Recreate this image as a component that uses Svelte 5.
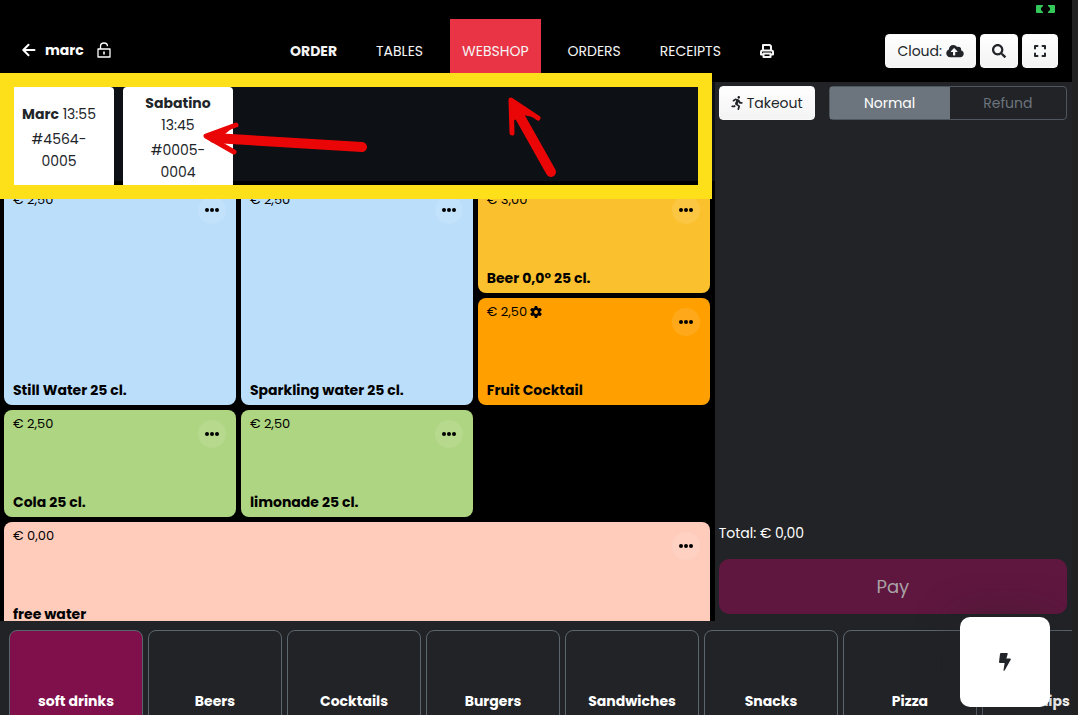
<script lang="ts">
	type Tile = { name: string; price: string; color: string; area: string; options?: boolean };

	const nav = ['ORDER', 'TABLES', 'WEBSHOP', 'ORDERS', 'RECEIPTS'];
	const tickets = [
		{ name: 'Marc', time: '13:55', ref: '#4564-0005' },
		{ name: 'Sabatino', time: '13:45', ref: '#0005-0004' }
	];
	const products: Tile[] = [
		{ name: 'Still Water 25 cl.', price: '€ 2,50', color: 'blue', area: 'tall' },
		{ name: 'Sparkling water 25 cl.', price: '€ 2,50', color: 'blue', area: 'tall' },
		{ name: 'Beer 0,0° 25 cl.', price: '€ 3,00', color: 'amber', area: '' },
		{ name: 'Fruit Cocktail', price: '€ 2,50', color: 'orange', area: '', options: true },
		{ name: 'Cola 25 cl.', price: '€ 2,50', color: 'green', area: 'first' },
		{ name: 'limonade 25 cl.', price: '€ 2,50', color: 'green', area: '' },
		{ name: 'free water', price: '€ 0,00', color: 'peach', area: 'wide' }
	];
	const categories = ['soft drinks', 'Beers', 'Cocktails', 'Burgers', 'Sandwiches', 'Snacks', 'Pizza', 'Chips'];

	let category = $state('soft drinks');
	let mode = $state('Normal');
</script>

<div class="pos">
	<header>
		<div class="brand">
			<button class="plain" aria-label="Back">
				<svg width="14" height="14" viewBox="0 0 14 14" fill="none" stroke="currentColor" stroke-width="2" stroke-linecap="round" stroke-linejoin="round">
					<path d="M12.5 7H1.5M6.5 1.8L1.3 7l5.2 5.2" />
				</svg>
			</button>
			<strong>marc</strong>
			<button class="plain" aria-label="Unlock">
				<svg width="14" height="16" viewBox="0 0 14 16" fill="none" stroke="currentColor" stroke-width="1.3" stroke-linejoin="round">
					<path d="M1 7h12v8H1zM3.5 7V4.2C3.5 2.3 5 1 7 1s3.5 1.3 3.5 3.2" />
					<path d="M7 9.5v3" stroke-width="1.6" />
				</svg>
			</button>
		</div>
		<nav>
			{#each nav as item}
				<a href="#{item.toLowerCase()}" class:current={item === 'ORDER'} class:alert={item === 'WEBSHOP'}>{item}</a>
			{/each}
			<a href="#print" aria-label="Print">
				<svg width="14" height="14" viewBox="0 0 14 14" fill="none" stroke="currentColor" stroke-width="2" stroke-linejoin="round">
					<path d="M3 6V1h6.8L11 2.200V6M3 10.500H1V8q0-1.500 1.500-1.500h9Q13 6.500 13 8v2.500h-2M3.500 9.500h7V13h-7z" />
				</svg>
			</a>
		</nav>
		<div class="actions">
			<button class="btn">
				Cloud:
				<svg width="18" height="14" viewBox="0 0 640 512" fill="currentColor">
					<path d="M537.6 226.6c4.1-10.7 6.4-22.4 6.4-34.6 0-53-43-96-96-96-19.7 0-38.1 6-53.3 16.2C367 64.2 315.3 32 256 32c-88.4 0-160 71.6-160 160 0 2.7.1 5.4.2 8.1C40.2 219.8 0 273.2 0 336c0 79.5 64.5 144 144 144h368c70.7 0 128-57.3 128-128 0-61.9-44-113.6-102.4-125.4zM393.4 288H328v112c0 8.8-7.2 16-16 16h-48c-8.8 0-16-7.2-16-16V288h-65.4c-14.3 0-21.4-17.2-11.3-27.3l105.4-105.4c6.2-6.2 16.4-6.2 22.6 0l105.4 105.4c10.1 10.1 2.9 27.3-11.3 27.3z" />
				</svg>
			</button>
			<button class="btn" aria-label="Search">
				<svg width="14" height="14" viewBox="0 0 512 512" fill="currentColor">
					<path d="M505 442.7L405.3 343c-4.5-4.5-10.6-7-17-7H372c27.6-35.3 44-79.7 44-128C416 93.1 322.9 0 208 0S0 93.1 0 208s93.1 208 208 208c48.3 0 92.7-16.4 128-44v16.3c0 6.4 2.5 12.5 7 17l99.7 99.7c9.4 9.4 24.6 9.4 33.9 0l28.3-28.3c9.4-9.4 9.4-24.6.1-34zM208 336c-70.7 0-128-57.2-128-128 0-70.7 57.2-128 128-128 70.7 0 128 57.2 128 128 0 70.7-57.2 128-128 128z" />
				</svg>
			</button>
			<button class="btn" aria-label="Full screen">
				<svg width="12" height="14" viewBox="0 0 12 14" fill="none" stroke="currentColor" stroke-width="2" stroke-linecap="round" stroke-linejoin="round">
					<path d="M1 4.500V2h2.500M8.500 2H11v2.500M11 9.500V12H8.500M3.500 12H1V9.500" />
				</svg>
			</button>
		</div>
		<svg class="link-state" width="19" height="8" viewBox="0 0 19 8" fill="#34c759">
			<path d="M1 0h6v1L5 3v2l2 2v1H1Q0 8 0 7V1Q0 0 1 0zM18 0h-6v1l2 2v2l-2 2v1h6q1 0 1-1V1q0-1-1-1z" />
		</svg>
	</header>

	<main>
		<section class="order">
			<div class="queue">
				{#each tickets as ticket}
					<button class="ticket">
						<span><b>{ticket.name}</b> {ticket.time}</span>
						<span>{ticket.ref}</span>
					</button>
				{/each}
			</div>
			<div class="products">
				{#each products as product}
					<article class="product {product.color} {product.area}">
						<span class="price">
							{product.price}
							{#if product.options}
								<svg width="12" height="12" viewBox="0 0 12 12">
									<g fill="currentColor">
										<circle cx="6" cy="6" r="4.4" />
										<rect x="4.5" width="3" height="12" rx="0.8" />
										<rect x="4.5" width="3" height="12" rx="0.8" transform="rotate(60 6 6)" />
										<rect x="4.5" width="3" height="12" rx="0.8" transform="rotate(120 6 6)" />
									</g>
									<circle cx="6" cy="6" r="1.9" fill="#ffa000" />
								</svg>
							{/if}
						</span>
						<button class="more" aria-label="More about {product.name}">
							<svg width="14" height="4" viewBox="0 0 14 4" fill="currentColor">
								<circle cx="2" cy="2" r="2" />
								<circle cx="7" cy="2" r="2" />
								<circle cx="12" cy="2" r="2" />
							</svg>
						</button>
						<strong>{product.name}</strong>
					</article>
				{/each}
			</div>
			<div class="frame"></div>
			<svg class="arrows" width="360" height="90" viewBox="0 0 360 90" fill="none" stroke="#ea0606" stroke-linecap="round" stroke-linejoin="round">
				<path d="M162 56L14 47" stroke-width="10" />
				<path d="M36 34L6 45l28 16" stroke-width="5" />
				<path d="M351 81L315 17" stroke-width="10" />
				<path d="M312 42L311 9l27 18" stroke-width="5" />
				<path d="M6 45l30-11-11 9-1 10 10 8zM311 9l27 18-15-3-10 6-1 12z" fill="#ea0606" stroke="none" />
			</svg>
		</section>

		<aside>
			<div class="options">
				<button class="btn">
					<svg width="12" height="14" viewBox="0 0 416 512" fill="currentColor">
						<path d="M272 96c26.51 0 48-21.49 48-48S298.51 0 272 0s-48 21.49-48 48 21.49 48 48 48zM113.69 317.47l-14.8 34.52H32c-17.67 0-32 14.33-32 32s14.33 32 32 32h77.45c19.25 0 36.58-11.44 44.11-29.09l8.79-20.52-10.67-6.3c-17.32-10.23-30.06-25.37-37.99-42.61zM384 223.99h-44.03l-26.06-53.25c-12.5-25.55-35.45-44.23-61.78-50.94l-71.08-21.14c-28.3-6.8-57.77-.55-80.84 17.14l-39.67 30.41c-14.03 10.75-16.69 30.83-5.92 44.86s30.84 16.66 44.86 5.92l39.69-30.41c7.67-5.89 17.44-8 25.27-6.14l14.7 4.37-37.46 87.39c-12.62 29.48-1.31 64.01 26.3 80.31l84.98 50.17-27.47 87.73c-5.28 16.86 4.11 34.82 20.97 40.09 3.19 1 6.41 1.48 9.58 1.48 13.61 0 26.23-8.77 30.52-22.45l31.64-101.06c5.91-20.77-2.89-43.08-21.64-54.39l-61.24-36.14 31.31-78.28 20.27 41.43c8 16.34 24.92 26.89 43.11 26.89H384c17.67 0 32-14.33 32-32s-14.33-31.99-32-31.99z" />
					</svg>
					Takeout
				</button>
				<div class="toggle">
					{#each ['Normal', 'Refund'] as option}
						<button class:active={mode === option} onclick={() => (mode = option)}>{option}</button>
					{/each}
				</div>
			</div>
			<p>Total: € 0,00</p>
			<button class="pay" disabled>Pay</button>
		</aside>
	</main>

	<footer>
		{#each categories as name}
			<button class:active={category === name} onclick={() => (category = name)}>{name}</button>
		{/each}
	</footer>

	<button class="quick" aria-label="Quick actions">
		<svg width="12" height="18" viewBox="0 0 12 18" fill="currentColor">
			<path d="M2 0h6q1 0 .7 1L7.4 5.500H11q1.200.1.7 1.200L5.600 17.500q-.8 1-1.100-.2L5.600 10H1Q0 10 0 9L1 1q.1-1 1-1z" />
		</svg>
	</button>
</div>

<style>
	:global(body) {
		margin: 0;
		background: #212121;
	}

	.pos {
		position: relative;
		display: flex;
		flex-direction: column;
		height: 100vh;
		margin-right: 6px;
		overflow: hidden;
		background: #222327;
		color: #fff;
		font-family: Poppins, Inter, sans-serif;
		font-size: 14px;
		line-height: 22px;
	}

	button {
		font: inherit;
		color: inherit;
		cursor: pointer;
	}

	svg {
		flex-shrink: 0;
	}

	header {
		position: relative;
		display: grid;
		grid-template-columns: 256px 1fr auto;
		align-items: end;
		box-sizing: border-box;
		height: 82px;
		padding: 0 14px 0 22px;
		background: #000;
	}

	.link-state {
		position: absolute;
		top: 5px;
		right: 17px;
	}

	.brand {
		display: flex;
		align-items: center;
		gap: 9px;
		height: 64px;
	}

	.brand strong {
		margin-right: 4px;
	}

	.plain {
		display: flex;
		padding: 0;
		border: 0;
		background: none;
	}

	nav {
		display: flex;
		gap: 15px;
	}

	nav a {
		display: flex;
		align-items: center;
		height: 63px;
		padding: 0 12px;
		color: #f4f4f4;
		text-decoration: none;
	}

	nav .current {
		font-weight: 700;
	}

	nav .alert {
		background: #e93445;
	}

	.actions {
		display: flex;
		align-items: center;
		gap: 4px;
		height: 63px;
	}

	.btn {
		display: flex;
		align-items: center;
		gap: 4px;
		height: 34px;
		padding: 0 11px;
		border: 1px solid #f8f9fa;
		border-radius: 4px;
		background: linear-gradient(#fff, #f3f3f3);
		color: #212529;
	}

	main {
		display: grid;
		grid-template-columns: 2fr 1fr;
		flex: 1;
		min-height: 0;
	}

	.order {
		position: relative;
		display: flex;
		flex-direction: column;
		min-height: 0;
		background: #000;
	}

	.queue {
		display: flex;
		gap: 9px;
		box-sizing: border-box;
		height: 99px;
		margin-bottom: 5px;
		padding: 5px 4px 0;
		background: #0d1014;
	}

	.ticket {
		display: flex;
		flex-direction: column;
		justify-content: center;
		gap: 3px;
		width: 110px;
		height: 101px;
		padding: 0 16px;
		border: 0;
		border-radius: 4px;
		background: #fff;
		color: #212529;
		line-height: 22px;
	}

	.products {
		display: grid;
		grid-template-columns: repeat(3, 1fr);
		grid-auto-rows: 107px;
		gap: 5px;
		flex: 1;
		min-height: 0;
		padding: 0 5px 0 4px;
		overflow: hidden;
	}

	.product {
		display: grid;
		grid-template: auto 1fr / 1fr auto;
		padding: 3px 9px 4px;
		border-radius: 8px;
		color: #000;
	}

	.product strong {
		grid-column: 1 / 3;
		align-self: end;
	}

	.price {
		display: flex;
		align-items: center;
		align-self: start;
		gap: 3px;
		font-size: 13px;
	}

	.more {
		display: grid;
		place-items: center;
		width: 28px;
		height: 28px;
		margin: 7px 1px 0 0;
		padding: 0;
		border: 0;
		border-radius: 50%;
		background: rgba(255, 255, 255, 0.1);
	}

	.tall {
		grid-row: span 2;
	}

	.first {
		grid-column: 1;
	}

	.wide {
		grid-column: 1 / -1;
	}

	.blue {
		background: #bbdefb;
	}

	.amber {
		background: #fbc02d;
	}

	.orange {
		background: #ffa000;
	}

	.green {
		background: #aed581;
	}

	.peach {
		background: #ffccbc;
	}

	/* callout drawn over the webshop queue */
	.frame {
		position: absolute;
		top: -9px;
		left: 0;
		right: 3px;
		box-sizing: border-box;
		height: 126px;
		border: 14px solid #fde01a;
		pointer-events: none;
	}

	.arrows {
		position: absolute;
		top: 9px;
		left: 200px;
		pointer-events: none;
	}

	aside {
		display: flex;
		flex-direction: column;
		padding: 4px 5px 7px 4px;
	}

	.options {
		display: flex;
		gap: 14px;
		flex: 1;
	}

	.toggle {
		display: grid;
		grid-template-columns: 120px 1fr;
		flex: 1;
		box-sizing: border-box;
		height: 34px;
		border: 1px solid #4f585f;
		border-radius: 4px;
	}

	.toggle button {
		padding: 0;
		border: 0;
		background: none;
		color: #6c757d;
	}

	.toggle .active {
		background: #6c757d;
		color: #fff;
	}

	aside p {
		margin: 0 0 15px;
	}

	.pay {
		height: 55px;
		border: 0;
		border-radius: 10px;
		background: #5f173f;
		color: #a9a3a6;
		font-size: 18px;
	}

	footer {
		display: flex;
		gap: 5px;
		box-sizing: border-box;
		height: 94px;
		padding: 9px 0 0 9px;
		overflow: hidden;
	}

	footer button {
		flex: 0 0 134px;
		height: 98px;
		padding: 44px 0 0;
		border: 1px solid #5b666e;
		border-radius: 8px;
		background: none;
		font-weight: 700;
	}

	footer .active {
		background: #80104b;
	}

	.quick {
		position: absolute;
		right: 22px;
		bottom: 8px;
		display: grid;
		place-items: center;
		width: 90px;
		height: 90px;
		border: 0;
		border-radius: 10px;
		background: #fff;
		box-shadow: 0 4px 40px rgba(33, 33, 33, 0.5);
		color: #212529;
	}
</style>
